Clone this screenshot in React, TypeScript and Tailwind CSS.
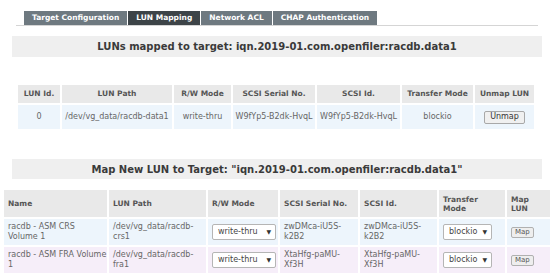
const tabs = [
  { label: "Target Configuration", active: false },
  { label: "LUN Mapping", active: true },
  { label: "Network ACL", active: false },
  { label: "CHAP Authentication", active: false },
]

const mapped = [
  { id: "0", path: "/dev/vg_data/racdb-data1", mode: "write-thru", serial: "W9fYp5-B2dk-HvqL", scsi: "W9fYp5-B2dk-HvqL", transfer: "blockio" },
]

const available = [
  { name: "racdb - ASM CRS Volume 1", path: "/dev/vg_data/racdb-crs1", serial: "zwDMca-iU5S-k2B2", scsi: "zwDMca-iU5S-k2B2", bg: "bg-[#edf5fc]" },
  { name: "racdb - ASM FRA Volume 1", path: "/dev/vg_data/racdb-fra1", serial: "XtaHfg-paMU-Xf3H", scsi: "XtaHfg-paMU-Xf3H", bg: "bg-[#f6eef9]" },
]

function FakeSelect({ value, width }: { value: string; width: string }) {
  return (
    <div className={`${width} flex h-[16px] items-center justify-between rounded-[2px] border border-[#b5b5b5] bg-white pl-[5px] pr-[4px] text-[8px] text-[#444]`}>
      <span>{value}</span>
      <span className="text-[6px] text-[#333]">▼</span>
    </div>
  )
}

export default function App() {
  return (
    <div
      className="h-[276px] w-[554px] overflow-hidden bg-white pt-[11px]"
      style={{ fontFamily: '"DejaVu Sans", Verdana, sans-serif' }}
    >
      {/* Tabs */}
      <div className="mx-[16px] flex gap-[1px] border-b border-[#d5d5d5] pl-[8px]">
        {tabs.map((t) => (
          <div
            key={t.label}
            className={`flex h-[14px] items-center px-[8px] text-[7.5px] font-bold text-white ${t.active ? "bg-[#3d4448]" : "bg-[#6e7980]"}`}
          >
            {t.label}
          </div>
        ))}
      </div>

      {/* Mapped LUNs */}
      <div className="mx-[12px] mt-[10px] flex h-[21px] items-center justify-center bg-[#efefef] text-[10px] font-bold text-[#3a3a3a]">
        LUNs mapped to target: iqn.2019-01.com.openfiler:racdb.data1
      </div>

      <table className="mx-[16px] mt-[26px] w-[520px] table-fixed border-separate border-spacing-[2px] text-[8px] text-[#666]">
        <colgroup>
          <col className="w-[42px]" />
          <col className="w-[110px]" />
          <col className="w-[57px]" />
          <col className="w-[82px]" />
          <col className="w-[83px]" />
          <col className="w-[71px]" />
          <col />
        </colgroup>
        <thead>
          <tr className="h-[18px] bg-[#e9e9e9] font-bold text-[#555]">
            <th className="text-[7.5px]">LUN Id.</th>
            <th className="text-[7.5px]">LUN Path</th>
            <th className="text-[7.5px]">R/W Mode</th>
            <th className="text-[7.5px]">SCSI Serial No.</th>
            <th className="text-[7.5px]">SCSI Id.</th>
            <th className="text-[7.5px]">Transfer Mode</th>
            <th className="text-[7.5px]">Unmap LUN</th>
          </tr>
        </thead>
        <tbody>
          {mapped.map((m) => (
            <tr key={m.id} className="h-[24px] bg-[#edf5fc] text-center">
              <td>{m.id}</td>
              <td>{m.path}</td>
              <td>{m.mode}</td>
              <td>{m.serial}</td>
              <td>{m.scsi}</td>
              <td>{m.transfer}</td>
              <td>
                <button className="h-[13px] rounded-[2px] border border-[#a8a8a8] bg-[#f0f0f0] px-[5px] text-[8px] leading-none text-[#333]">
                  Unmap
                </button>
              </td>
            </tr>
          ))}
        </tbody>
      </table>

      {/* Map new LUN */}
      <div className="mx-[12px] mt-[28px] flex h-[20px] items-center justify-center bg-[#efefef] text-[10px] font-bold text-[#3a3a3a]">
        Map New LUN to Target: "iqn.2019-01.com.openfiler:racdb.data1"
      </div>

      <table className="mx-[2px] mt-[9px] w-[550px] table-fixed border-separate border-spacing-[2px] text-left text-[8px] leading-[10px] text-[#666]">
        <colgroup>
          <col className="w-[103px]" />
          <col className="w-[97px]" />
          <col className="w-[70px]" />
          <col className="w-[78px]" />
          <col className="w-[77px]" />
          <col className="w-[66px]" />
          <col />
        </colgroup>
        <thead>
          <tr className="h-[27px] bg-[#e9e9e9] text-[7.5px] font-bold text-[#555]">
            <th className="px-[4px] font-bold">Name</th>
            <th className="px-[4px] font-bold">LUN Path</th>
            <th className="px-[4px] font-bold">R/W Mode</th>
            <th className="px-[4px] font-bold">SCSI Serial No.</th>
            <th className="px-[4px] font-bold">SCSI Id.</th>
            <th className="px-[4px] font-bold leading-[9px]">Transfer Mode</th>
            <th className="px-[4px] font-bold leading-[9px]">Map LUN</th>
          </tr>
        </thead>
        <tbody>
          {available.map((a) => (
            <tr key={a.name} className={`h-[26px] ${a.bg}`}>
              <td className="pl-[4px] pr-0">{a.name}</td>
              <td className="px-[4px]">{a.path}</td>
              <td className="px-[4px]">
                <FakeSelect value="write-thru" width="w-[64px]" />
              </td>
              <td className="px-[4px]">{a.serial}</td>
              <td className="px-[4px]">{a.scsi}</td>
              <td className="px-[4px]">
                <FakeSelect value="blockio" width="w-[49px]" />
              </td>
              <td className="px-[4px]">
                <button className="h-[11px] rounded-[2px] border border-[#b0b0b0] bg-[#eeeeee] px-[3px] text-[7px] leading-none text-[#555]">
                  Map
                </button>
              </td>
            </tr>
          ))}
        </tbody>
      </table>
    </div>
  )
}
